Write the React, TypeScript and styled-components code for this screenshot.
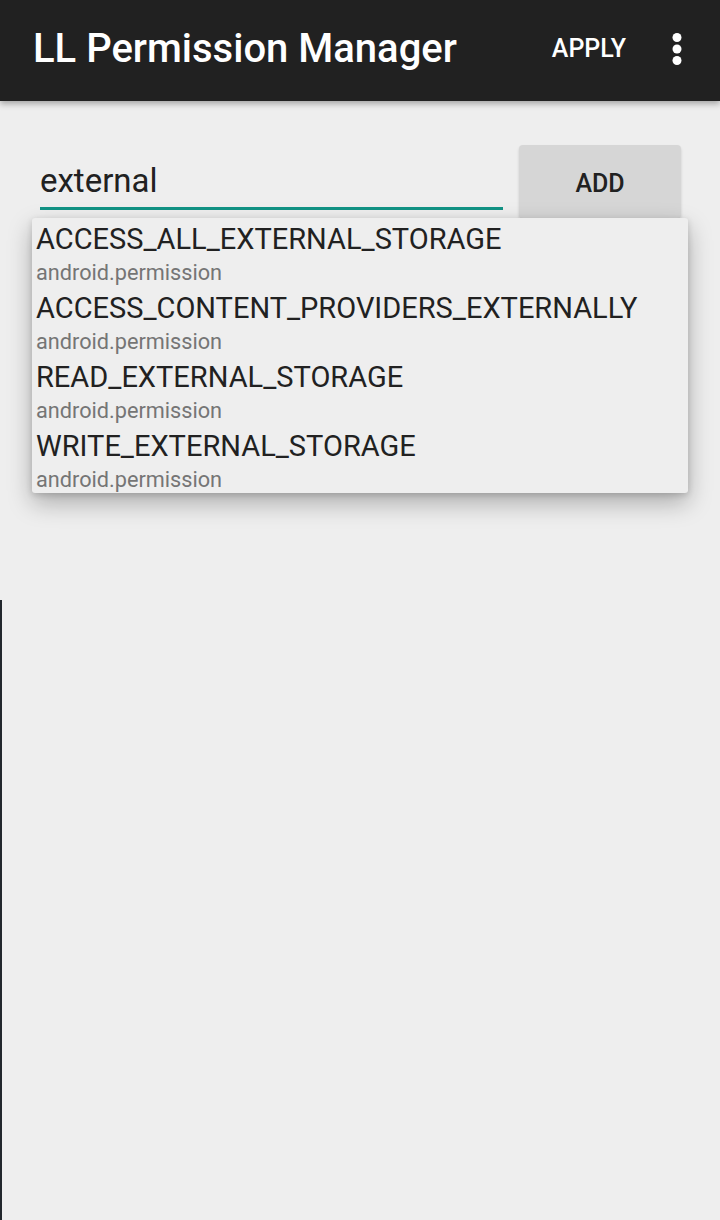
import React from 'react';
import styled, { createGlobalStyle } from 'styled-components';

const GlobalStyle = createGlobalStyle`
  html, body {
    margin: 0;
    padding: 0;
    background: #eeeeee;
    font-family: Roboto, 'Liberation Sans', sans-serif;
  }
`;

const Screen = styled.div`
  position: relative;
  width: 720px;
  height: 1220px;
  overflow: hidden;
  background: #eeeeee;
`;

const AppBar = styled.header`
  display: flex;
  align-items: center;
  height: 101px;
  padding: 0 38px 4px 33px;
  box-sizing: border-box;
  background: #212121;
  color: #ffffff;
  box-shadow: 0 3px 6px rgba(0, 0, 0, 0.3);
  position: relative;
  z-index: 2;
`;

const Title = styled.h1`
  flex: 1;
  margin: 0;
  font-size: 40px;
  font-weight: 500;
`;

const Action = styled.span`
  font-size: 25px;
  font-weight: 500;
  margin-right: 46px;
`;

const Overflow = styled.svg`
  width: 10px;
  height: 32px;
  display: block;
`;

const Content = styled.main`
  padding: 44px 39px 0 32px;
`;

const InputRow = styled.div`
  display: flex;
  align-items: flex-start;
  gap: 16px;
`;

const Field = styled.div`
  flex: 1;
  margin-left: 8px;
  padding-top: 15px;
  height: 47px;
  border-bottom: 3px solid #129385;
  font-size: 33px;
  color: #212121;
  line-height: 42px;
`;

const AddButton = styled.button`
  width: 162px;
  height: 73px;
  border: none;
  border-radius: 4px;
  background: #d6d6d6;
  color: #212121;
  font-family: Roboto, 'Liberation Sans', sans-serif;
  font-size: 25px;
  font-weight: 500;
  padding-top: 4px;
  box-shadow: 0 2px 3px rgba(0, 0, 0, 0.15);
`;

const Dropdown = styled.ul`
  list-style: none;
  margin: 0;
  padding: 4px 0 0;
  width: 656px;
  height: 275px;
  box-sizing: border-box;
  background: #eeeeee;
  border-radius: 3px;
  box-shadow: 0 10px 24px rgba(0, 0, 0, 0.28), 0 2px 6px rgba(0, 0, 0, 0.15);
  position: relative;
  z-index: 1;
  overflow: hidden;
`;

const Item = styled.li`
  display: flex;
  flex-direction: column;
  height: 69px;
  padding-left: 4px;
`;

const Name = styled.span`
  font-size: 29px;
  line-height: 34px;
  color: #212121;
`;

const Pkg = styled.span`
  font-size: 21.7px;
  line-height: 34px;
  color: #757575;
`;

const DrawerEdge = styled.div`
  position: absolute;
  left: 0;
  top: 600px;
  bottom: 0;
  width: 2px;
  background: #22272d;
`;

const permissions = [
  'ACCESS_ALL_EXTERNAL_STORAGE',
  'ACCESS_CONTENT_PROVIDERS_EXTERNALLY',
  'READ_EXTERNAL_STORAGE',
  'WRITE_EXTERNAL_STORAGE',
];

export default function App() {
  return (
    <Screen>
      <GlobalStyle />
      <AppBar>
        <Title>LL Permission Manager</Title>
        <Action>APPLY</Action>
        <Overflow viewBox="0 0 10 32">
          <circle cx="5" cy="4.5" r="4.5" fill="#fff" />
          <circle cx="5" cy="16" r="4.5" fill="#fff" />
          <circle cx="5" cy="27.5" r="4.5" fill="#fff" />
        </Overflow>
      </AppBar>
      <Content>
        <InputRow>
          <Field>external</Field>
          <AddButton>ADD</AddButton>
        </InputRow>
        <Dropdown>
          {permissions.map((p) => (
            <Item key={p}>
              <Name>{p}</Name>
              <Pkg>android.permission</Pkg>
            </Item>
          ))}
        </Dropdown>
      </Content>
      <DrawerEdge />
    </Screen>
  );
}
